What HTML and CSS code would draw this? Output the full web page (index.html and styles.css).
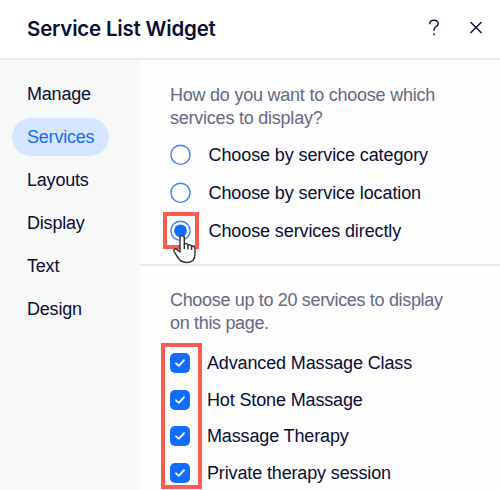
FILE: index.html
```html
<!DOCTYPE html>
<html lang="en">
<head>
<meta charset="utf-8">
<title>Service List Widget</title>
<link rel="stylesheet" href="styles.css">
</head>
<body>
<div class="panel">
  <header class="header">
    <h1 class="title">Service List Widget</h1>
    <div class="actions">
      <svg class="icon" width="12" height="18" viewBox="0 0 12 18"><path d="M1.8 5.2V4.6C1.8 2.6 3.6 1.2 5.8 1.2S10.2 2.6 10.2 4.7C10.2 7.8 6 7.7 6 10.6V11.7M6 14.3V16.3"/></svg>
      <svg class="icon" width="14" height="14" viewBox="0 0 14 14"><path d="M1.5 1.1L12.5 12.1M12.5 1.1L1.5 12.1"/></svg>
    </div>
  </header>
  <div class="body">
    <nav class="nav">
      <a class="tab">Manage</a>
      <a class="tab active">Services</a>
      <a class="tab">Layouts</a>
      <a class="tab">Display</a>
      <a class="tab">Text</a>
      <a class="tab">Design</a>
    </nav>
    <main class="main">
      <section class="section choose">
        <p class="prompt">How do you want to choose which<br>services to display?</p>
        <div class="options">
          <label class="option"><svg class="radio" width="21" height="22" viewBox="0 0 21 22"><circle class="ring" cx="10.5" cy="10.8" r="9.6"/></svg><span>Choose by service category</span></label>
          <label class="option"><svg class="radio" width="21" height="22" viewBox="0 0 21 22"><circle class="ring" cx="10.5" cy="10.8" r="9.6"/></svg><span>Choose by service location</span></label>
          <label class="option"><svg class="radio" width="21" height="22" viewBox="0 0 21 22"><circle class="ring" cx="10.5" cy="10.8" r="9.6"/><circle class="dot" cx="10.5" cy="10.8" r="6.4"/></svg><span>Choose services directly</span></label>
        </div>
        <div class="highlight highlight-radio"></div>
        <svg class="cursor" width="26" height="32" viewBox="0 0 26 32"><path d="M8 19V5.2C8 1.7 12.3 1.7 12.3 5.2V11C13.5 10 15.8 10.5 16 12.2C17.5 11.3 19.4 12 19.6 13.6C21.3 12.9 23 13.9 23 15.8V20.5C23 26 20.2 29.5 15 29.5C10 29.5 7.2 27.3 5.3 23.7L2.2 18.6C1 16.4 3.2 15 5.1 16.4Z"/><path d="M12.3 10.5V16M16 12V16.5M19.6 13.5V17"/></svg>
      </section>
      <section class="section services">
        <p class="prompt limit">Choose up to 20 services to display<br>on this page.</p>
        <div class="checks">
          <label class="check"><span class="box"><svg width="20" height="20" viewBox="0 0 20 20"><path d="M6 10.3L8.8 12.8L14 7.2"/></svg></span><span class="name">Advanced Massage Class</span></label>
          <label class="check"><span class="box"><svg width="20" height="20" viewBox="0 0 20 20"><path d="M6 10.3L8.8 12.8L14 7.2"/></svg></span><span class="name">Hot Stone Massage</span></label>
          <label class="check"><span class="box"><svg width="20" height="20" viewBox="0 0 20 20"><path d="M6 10.3L8.8 12.8L14 7.2"/></svg></span><span class="name">Massage Therapy</span></label>
          <label class="check"><span class="box"><svg width="20" height="20" viewBox="0 0 20 20"><path d="M6 10.3L8.8 12.8L14 7.2"/></svg></span><span class="name">Private therapy session</span></label>
        </div>
        <div class="highlight highlight-checks"></div>
      </section>
    </main>
  </div>
</div>
</body>
</html>
```

FILE: styles.css
```css
* { box-sizing: border-box; }
body { margin: 0; background: #fff; color: #080d35; font: 18px/23px "Liberation Sans", Arial, sans-serif; letter-spacing: -0.1px; }
.panel { width: 500px; height: 490px; overflow: hidden; display: flex; flex-direction: column; }
.header { height: 60px; flex: none; display: flex; align-items: center; justify-content: space-between; padding: 0 17.5px 1px 27px; border-bottom: 2px solid #e4eaf2; }
.title { margin: 0; padding-top: 1px; font: 600 20.5px/28px Inter, sans-serif; letter-spacing: -0.2px; }
.actions { display: flex; align-items: center; gap: 29px; padding-bottom: 2px; }
.icon { fill: none; stroke: #080d35; stroke-width: 1.4; }
.body { flex: 1; display: flex; min-height: 0; }
.nav { width: 140px; flex: none; background: #f7f9f8; padding: 15px 0 0 12px; display: flex; flex-direction: column; align-items: flex-start; gap: 5px; }
.tab { height: 38px; padding: 0 15px; line-height: 38px; border-radius: 19px; letter-spacing: -0.2px; }
.active { background: #d6e6fe; color: #116dff; }
.main { flex: 1; background: #fdfdfd; }
.section { position: relative; padding-left: 30px; white-space: nowrap; }
.choose { height: 206px; padding-top: 24px; border-bottom: 2px solid #e4eaf2; }
.services { height: 224px; padding-top: 23px; }
.prompt { margin: 0; color: #656983; letter-spacing: -0.23px; }
.limit { letter-spacing: -0.33px; }
.options { display: flex; flex-direction: column; padding-top: 6px; }
.option { height: 38px; display: flex; align-items: center; gap: 17.5px; }
.radio { display: block; fill: #fff; }
.ring { stroke: #3982ff; stroke-width: 1.4; }
.dot { fill: #116dff; }
.checks { padding-top: 10px; }
.check { height: 36.5px; display: flex; align-items: center; gap: 17px; }
.name { padding-top: 1px; letter-spacing: -0.14px; }
.box { width: 20px; height: 20px; border-radius: 5px; background: #116dff; }
.box svg { display: block; fill: none; stroke: #fff; stroke-width: 1.8; stroke-linecap: round; stroke-linejoin: round; }
.highlight { position: absolute; border: 4px solid #fa5c50; }
.highlight-radio { left: 23px; top: 152px; width: 36px; height: 37px; }
.highlight-checks { left: 21px; top: 77px; width: 41px; height: 146px; }
.cursor { position: absolute; left: 31.5px; top: 173px; fill: #fff; stroke: #303030; stroke-width: 1.4; stroke-linejoin: round; z-index: 1; }
```
